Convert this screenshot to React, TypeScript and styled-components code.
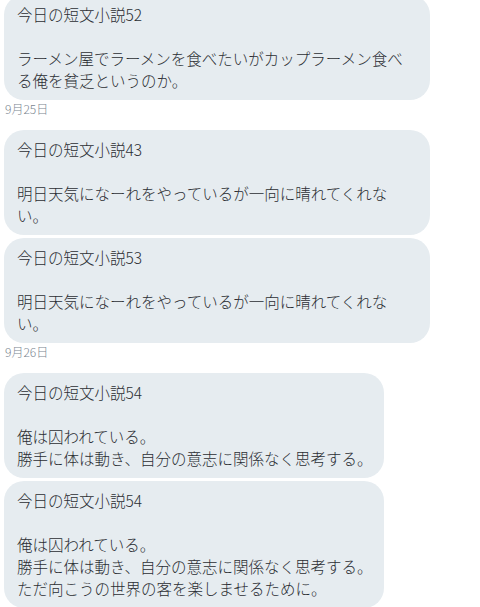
import React from "react";
import styled, { createGlobalStyle } from "styled-components";

const GlobalStyle = createGlobalStyle`
  html, body {
    margin: 0;
    padding: 0;
    background: #ffffff;
  }
  body {
    font-family: "Noto Sans CJK JP", "Noto Sans", sans-serif;
    overflow: hidden;
  }
`;

const Page = styled.div`
  width: 480px;
  height: 607px;
  overflow: hidden;
  display: flex;
  flex-direction: column;
  align-items: flex-start;
  padding: 0 0 0 4px;
  box-sizing: border-box;
`;

const Group = styled.div<{ $first?: boolean }>`
  display: flex;
  flex-direction: column;
  align-items: flex-start;
  gap: 3px;
  margin-top: ${(p) => (p.$first ? "-5px" : "0")};
`;

const Bubble = styled.div`
  box-sizing: border-box;
  max-width: 426px;
  background: #e6ecf0;
  color: #2b2e33;
  border-radius: 20px;
  padding: 8px 12px 9px 13px;
  font-size: 15.5px;
  font-weight: 300;
  line-height: 22px;
  white-space: pre-wrap;
  line-break: strict;
`;

const DateLabel = styled.div`
  font-family: "Noto Sans CJK JP", "Noto Sans", sans-serif;
  font-size: 12px;
  font-weight: 300;
  line-height: 16px;
  color: #7a8590;
  padding: 1px 0 13px 1px;
`;

type Day = { date?: string; messages: string[] };

const days: Day[] = [
  {
    date: "9月25日",
    messages: [
      "今日の短文小説52\n\nラーメン屋でラーメンを食べたいがカップラーメン食べる俺を貧乏というのか。",
    ],
  },
  {
    date: "9月26日",
    messages: [
      "今日の短文小説43\n\n明日天気になーれをやっているが一向に晴れてくれない。",
      "今日の短文小説53\n\n明日天気になーれをやっているが一向に晴れてくれない。",
    ],
  },
  {
    messages: [
      "今日の短文小説54\n\n俺は囚われている。\n勝手に体は動き、自分の意志に関係なく思考する。",
      "今日の短文小説54\n\n俺は囚われている。\n勝手に体は動き、自分の意志に関係なく思考する。\nただ向こうの世界の客を楽しませるために。",
    ],
  },
];

export default function App() {
  return (
    <>
      <GlobalStyle />
      <Page>
        {days.map((d, i) => (
          <React.Fragment key={i}>
            <Group $first={i === 0}>
              {d.messages.map((m, j) => (
                <Bubble key={j}>{m}</Bubble>
              ))}
            </Group>
            {d.date && <DateLabel>{d.date}</DateLabel>}
          </React.Fragment>
        ))}
      </Page>
    </>
  );
}
